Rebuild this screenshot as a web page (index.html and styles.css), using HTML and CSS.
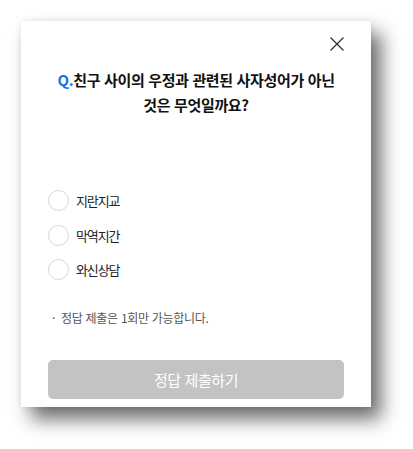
FILE: index.html
```html
<!DOCTYPE html>
<html lang="ko">
<head>
<meta charset="utf-8">
<link rel="stylesheet" href="styles.css">
</head>
<body>
<div class="stage">
  <div class="card">
    <div class="top">
      <button class="close" aria-label="닫기">
        <svg width="16" height="16" viewBox="0 0 16 16"><path d="M1.5 1.5 L14.5 14.5 M14.5 1.5 L1.5 14.5" stroke="#333" stroke-width="1.3" fill="none"/></svg>
      </button>
    </div>
    <h2 class="question"><span class="q">Q.</span>친구 사이의 우정과 관련된 사자성어가 아닌<br>것은 무엇일까요?</h2>
    <ul class="options">
      <li class="option"><span class="radio"></span><span class="label">지란지교</span></li>
      <li class="option"><span class="radio"></span><span class="label">막역지간</span></li>
      <li class="option"><span class="radio"></span><span class="label">와신상담</span></li>
    </ul>
    <p class="note"><span class="dot">·</span>정답 제출은 1회만 가능합니다.</p>
    <button class="submit">정답 제출하기</button>
  </div>
</div>
</body>
</html>
```
FILE: styles.css
```css
* { box-sizing: border-box; }
html, body { margin: 0; padding: 0; background: #fff; }
body { font-family: "Noto Sans CJK KR", "Noto Sans", sans-serif; color: #111; }
.stage { padding: 21px 0 42px 21px; min-height: 449px; }
.card {
  width: 350px;
  height: 386px;
  background: #fff;
  box-shadow: 10px 12px 18px rgba(0,0,0,0.58), 0 0 6px rgba(0,0,0,0.08);
  padding: 12px 27px 8px 27px;
  display: flex;
  flex-direction: column;
}
.top { display: flex; justify-content: flex-end; height: 24px; padding-right: 2px; }
.close { border: 0; background: none; padding: 0; width: 16px; height: 16px; margin-top: 3px; margin-right: -3px; }
.close svg { display: block; }
.question {
  margin: 11px 0 0 0;
  text-align: center;
  font-size: 15px;
  font-weight: 700;
  line-height: 24.5px;
  letter-spacing: -0.35px;
  white-space: nowrap;
  color: #111;
}
.q { color: #1a6fe3; letter-spacing: -0.3px; }
.options { list-style: none; margin: 73px 0 0 0; padding: 0; display: flex; flex-direction: column; gap: 13.5px; }
.option { display: flex; align-items: center; height: 21px; }
.radio { width: 21px; height: 21px; border: 1px solid #d6d6d6; border-radius: 50%; margin-right: 7px; }
.label { font-size: 13px; color: #222; letter-spacing: -1.1px; }
.note { margin: 28.5px 0 0 4px; font-size: 12px; color: #555; letter-spacing: -0.3px; line-height: 18px; }
.dot { margin-right: 6px; }
.submit {
  margin-top: auto;
  height: 39px;
  border: 0;
  border-radius: 5px;
  background: #c3c3c3;
  color: #fff;
  font-family: inherit;
  font-size: 15px;
  letter-spacing: -0.4px;
}
```
